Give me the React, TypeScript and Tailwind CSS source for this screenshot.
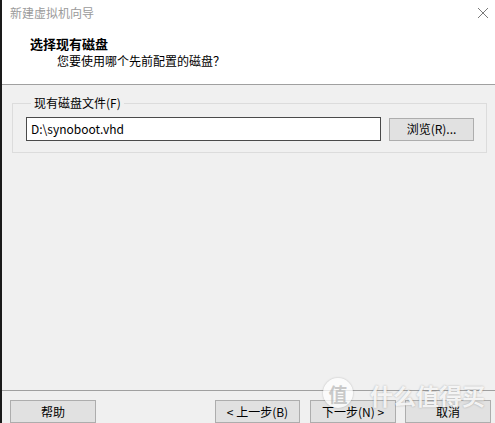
import React from 'react';

const font = { fontFamily: '"Noto Sans CJK SC", "Noto Sans", sans-serif' };

const Btn = ({ label, w }: { label: string; w: string }) => (
  <button
    className={`${w} h-[23px] bg-[#e1e1e1] border border-[#adadad] text-[12px] leading-none text-black flex items-center justify-center`}
  >
    {label}
  </button>
);

export default function App() {
  return (
    <div
      className="relative w-[495px] h-[423px] overflow-hidden bg-[#f0f0f0] border-l-2 border-[#1a1a1a] flex flex-col"
      style={font}
    >
      {/* header */}
      <div className="h-[85px] bg-white border-b border-[#a0a0a0] shrink-0">
        <div className="h-[26px] flex items-center justify-between pl-[8px] pr-[4px]">
          <span className="text-[12px] text-[#9a9a9a]">新建虚拟机向导</span>
          <svg width="14" height="14" viewBox="0 0 14 14" className="mr-[1px]">
            <path d="M2 2 L12 12 M12 2 L2 12" stroke="#7a7a7a" strokeWidth="1" />
          </svg>
        </div>
        <div className="pl-[28px] mt-[9px] text-[13px] font-bold leading-[18px] text-black">选择现有磁盘</div>
        <div className="pl-[55px] text-[12px] leading-[16px] text-black">您要使用哪个先前配置的磁盘？</div>
      </div>

      {/* body */}
      <div className="flex-1 px-[10px] pt-[10px]">
        <fieldset className="border border-[#dcdcdc] pl-[13px] pr-[12px] pb-[11px]">
          <legend className="ml-[5px] px-[3px] text-[12px] leading-[16px] text-black">现有磁盘文件(F)</legend>
          <div className="flex items-center gap-[8px] mt-[6px]">
            <div className="w-[355px] h-[24px] bg-white border border-[#4a4a4a] flex items-center pl-[4px] text-[12px] text-black">
              D:\synoboot.vhd
            </div>
            <Btn label="浏览(R)..." w="w-[85px]" />
          </div>
        </fieldset>
      </div>

      {/* footer */}
      <div className="h-[33px] shrink-0 border-t border-[#a0a0a0] pt-[9px] flex justify-between pl-[8px] pr-[4px]">
        <Btn label="帮助" w="w-[86px]" />
        <div className="flex">
          <Btn label="< 上一步(B)" w="w-[85px]" />
          <div className="ml-[10px]"><Btn label="下一步(N) >" w="w-[86px]" /></div>
          <div className="ml-[9px]"><Btn label="取消" w="w-[86px]" /></div>
        </div>
      </div>

      {/* watermark */}
      <div className="absolute left-[321px] top-[378px] w-[30px] h-[30px] rounded-full bg-white/75 shadow-[0_0_2px_rgba(0,0,0,0.25)] flex items-center justify-center text-[19px] font-bold text-[#a8a8a8]/60 leading-none">
        值
      </div>
      <div className="absolute left-[368px] top-[382px] whitespace-nowrap text-[23px] font-bold text-white/85 leading-[26px] [text-shadow:0_0_2px_rgba(0,0,0,0.3)]">
        什么值得买
      </div>
    </div>
  );
}
